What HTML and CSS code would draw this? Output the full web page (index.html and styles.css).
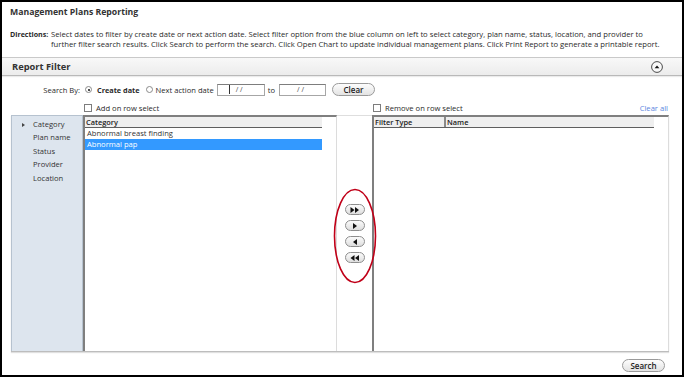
FILE: index.html
```html
<!DOCTYPE html>
<html>
<head>
<meta charset="utf-8">
<title>Management Plans Reporting</title>
<link rel="stylesheet" href="styles.css">
</head>
<body>
<div class="frame">
  <div class="title">Management Plans Reporting</div>
  <div class="directions">
    <span class="dir-label">Directions:</span>
    <span class="dir-text">Select dates to filter by create date or next action date. Select filter option from the blue column on left to select category, plan name, status, location, and provider to<br>further filter search results. Click Search to perform the search. Click Open Chart to update individual management plans. Click Print Report to generate a printable report.</span>
  </div>

  <div class="filter-bar">
    <span class="bar-title">Report Filter</span>
    <span class="collapse">
      <svg width="12" height="12" viewBox="0 0 12 12"><circle cx="6" cy="6" r="5.4" fill="#f8f8f8" stroke="#4a4a4a" stroke-width="1"/><path d="M3.6 7.2 L6 4.6 L8.4 7.2 Z" fill="#111"/></svg>
    </span>
  </div>

  <div class="search-row">
    <span class="sb-label">Search By:</span>
    <span class="radio checked"></span>
    <span class="opt opt-bold">Create date</span>
    <span class="radio radio-2"></span>
    <span class="opt">Next action date</span>
    <span class="date date-1"><span class="caret"></span><span class="mask">/ /</span></span>
    <span class="to">to</span>
    <span class="date date-2"><span class="mask">/ /</span></span>
    <span class="btn btn-clear">Clear</span>
  </div>

  <div class="check-row cols">
    <div></div>
    <div class="chk"><span class="box"></span>Add on row select</div>
    <div></div>
    <div class="chk chk-right"><span class="box"></span>Remove on row select<span class="clear-all">Clear all</span></div>
  </div>

  <div class="panel cols">
    <ul class="nav">
      <li class="nav-item active">Category</li>
      <li class="nav-item">Plan name</li>
      <li class="nav-item">Status</li>
      <li class="nav-item">Provider</li>
      <li class="nav-item">Location</li>
    </ul>

    <div class="list list-cat">
      <div class="list-head"><span class="hcell hcell-cat">Category</span></div>
      <div class="row">Abnormal breast finding</div>
      <div class="row selected">Abnormal pap</div>
    </div>

    <div class="mover">
      <span class="mbtn"><svg width="10" height="6" viewBox="0 0 10 6"><path d="M0.5 0 L4.5 3 L0.5 6 Z M5 0 L9 3 L5 6 Z" fill="#111"/></svg></span>
      <span class="mbtn"><svg width="10" height="6" viewBox="0 0 10 6"><path d="M3 0 L7 3 L3 6 Z" fill="#111"/></svg></span>
      <span class="mbtn"><svg width="10" height="6" viewBox="0 0 10 6"><path d="M7 0 L3 3 L7 6 Z" fill="#111"/></svg></span>
      <span class="mbtn"><svg width="10" height="6" viewBox="0 0 10 6"><path d="M4.5 0 L0.5 3 L4.5 6 Z M9 0 L5 3 L9 6 Z" fill="#111"/></svg></span>
      <svg class="ring" width="44" height="96" viewBox="0 0 44 96"><ellipse cx="22" cy="48" rx="20.5" ry="46.5" fill="none" stroke="#c00018" stroke-width="1.6"/></svg>
    </div>

    <div class="list list-sel">
      <div class="list-head"><span class="hcell hcell-type">Filter Type</span><span class="hcell hcell-name">Name</span></div>
    </div>
  </div>

  <div class="footer">
    <span class="btn btn-search">Search</span>
  </div>
</div>
</body>
</html>
```

FILE: styles.css
```css
html, body {
  margin: 0;
  padding: 0;
  background: #ffffff;
}

.frame {
  box-sizing: border-box;
  width: 684px;
  height: 377px;
  border: 2px solid #000;
  font-family: "Open Sans", "Noto Sans", sans-serif;
  font-size: 7.6px;
  color: #2a2a2a;
  overflow: hidden;
}

.title {
  height: 20px;
  line-height: 20px;
  padding-left: 8px;
  font-size: 8.7px;
  font-weight: 700;
  color: #333;
}

.directions {
  display: flex;
  margin-top: 7px;
  padding-left: 8px;
  line-height: 10px;
  font-size: 7.7px;
  white-space: nowrap;
}

.dir-label {
  width: 41px;
  flex: none;
  font-size: 7.1px;
  font-weight: 700;
}

.filter-bar {
  box-sizing: border-box;
  display: flex;
  align-items: center;
  justify-content: space-between;
  height: 19px;
  margin-top: 8px;
  padding: 0 19px 0 10px;
  border-top: 1px solid #c9c9c9;
  border-bottom: 1px solid #b9b9b9;
  background: linear-gradient(#f8f8f8, #ececec);
  box-shadow: 0 1px 1px rgba(0, 0, 0, 0.08);
}

.bar-title {
  font-size: 9.3px;
  font-weight: 700;
  color: #333;
}

.collapse {
  display: flex;
  width: 12px;
  height: 12px;
}

.search-row {
  display: flex;
  align-items: center;
  height: 13px;
  margin-top: 7px;
}

.sb-label {
  width: 78px;
  flex: none;
  text-align: right;
}

.radio {
  box-sizing: border-box;
  width: 7px;
  height: 7px;
  border-radius: 50%;
  border: 1px solid #8a8a8a;
  background: #fff;
  margin-left: 5px;
  flex: none;
  position: relative;
}

.radio.checked::after {
  content: "";
  position: absolute;
  left: 1.5px;
  top: 1.5px;
  width: 2px;
  height: 2px;
  border-radius: 50%;
  background: #111;
}

.radio-2 {
  margin-left: 6px;
}

.opt {
  margin-left: 3px;
}

.opt-bold {
  font-size: 7.3px;
  font-weight: 700;
  margin-left: 5px;
}

.date {
  box-sizing: border-box;
  display: flex;
  align-items: center;
  width: 48px;
  height: 12px;
  margin-left: 3px;
  border: 1px solid #a6a6a6;
  border-top-color: #7d7d7d;
  background: #fff;
  font-size: 7px;
  color: #444;
}

.date-1 .caret {
  width: 1px;
  height: 9px;
  margin-left: 11px;
  background: #333;
}

.date-1 .mask {
  margin-left: 6px;
}

.date-2 .mask {
  margin-left: 17px;
}

.to {
  margin-left: 3px;
}

.date-2 {
  width: 47px;
  margin-left: 4px;
}

.btn {
  box-sizing: border-box;
  display: inline-flex;
  align-items: center;
  justify-content: center;
  height: 13px;
  border: 1px solid #9a9a9a;
  border-radius: 7px;
  background: linear-gradient(#fdfdfd, #e3e3e3);
  font-size: 8px;
  font-weight: 600;
  color: #222;
}

.btn-clear {
  width: 43px;
  margin-left: 6px;
}

.cols {
  display: grid;
  grid-template-columns: 72px 254px 35px 297px;
  margin-left: 9px;
  width: 658px;
}

.check-row {
  height: 10px;
  margin-top: 7px;
  align-items: center;
}

.chk {
  display: flex;
  align-items: center;
  padding-left: 1px;
}

.box {
  box-sizing: border-box;
  width: 8px;
  height: 8px;
  border: 1px solid #7d7d7d;
  background: #fff;
  margin-right: 4px;
  flex: none;
}

.chk-right {
  padding-right: 1px;
}

.clear-all {
  margin-left: auto;
  color: #5a86e0;
}

.panel {
  height: 237px;
  margin-top: 2px;
  box-sizing: border-box;
  border-bottom: 1px solid #bdbdbd;
  box-shadow: 0 1px 1px rgba(0, 0, 0, 0.12);
}

.nav {
  list-style: none;
  margin: 0;
  padding: 2px 0 0 0;
  background: #dde5ee;
  border: 1px solid #b6c2cf;
  border-bottom: none;
}

.nav-item {
  position: relative;
  height: 13.4px;
  line-height: 13.4px;
  padding-left: 21px;
  font-size: 7.6px;
  color: #333;
}

.nav-item.active::before {
  content: "";
  position: absolute;
  left: 10px;
  top: 4.7px;
  border-left: 3px solid #444;
  border-top: 2px solid transparent;
  border-bottom: 2px solid transparent;
}

.list {
  box-sizing: border-box;
  background: #fff;
  border-top: 2px solid #7f7f7f;
  border-left: 2px solid #7f7f7f;
  border-right: 1px solid #dcdcdc;
}

.list-head {
  display: flex;
  height: 10px;
  margin-right: 14px;
  background: #efefef;
  border-bottom: 1px solid #5e5e5e;
  line-height: 10px;
  font-size: 7.4px;
  font-weight: 600;
  color: #222;
}

.hcell {
  padding-left: 1px;
}

.hcell-cat {
  flex: 1;
}

.hcell-type {
  width: 69px;
  border-right: 2px solid #8a8a8a;
}

.hcell-name {
  flex: 1;
}

.row {
  height: 11px;
  line-height: 11px;
  padding-left: 2px;
  margin-right: 14px;
  font-size: 7.6px;
  color: #333;
}

.row.selected {
  background: #3399ff;
  color: #fff;
}

.mover {
  position: relative;
  display: flex;
  flex-direction: column;
  align-items: center;
  justify-content: center;
  gap: 5px;
  border-top: 1px solid #dedede;
  background: #fff;
}

.mbtn {
  box-sizing: border-box;
  display: flex;
  align-items: center;
  justify-content: center;
  width: 20px;
  height: 11px;
  border: 1px solid #8e8e8e;
  border-radius: 6px;
  background: linear-gradient(#fbfbfb, #dedede);
}

.ring {
  position: absolute;
  left: -4px;
  top: 72px;
  z-index: 2;
  overflow: visible;
}

.footer {
  display: flex;
  justify-content: flex-end;
  margin-top: 7px;
  padding-right: 17px;
}

.btn-search {
  width: 43px;
}
```
